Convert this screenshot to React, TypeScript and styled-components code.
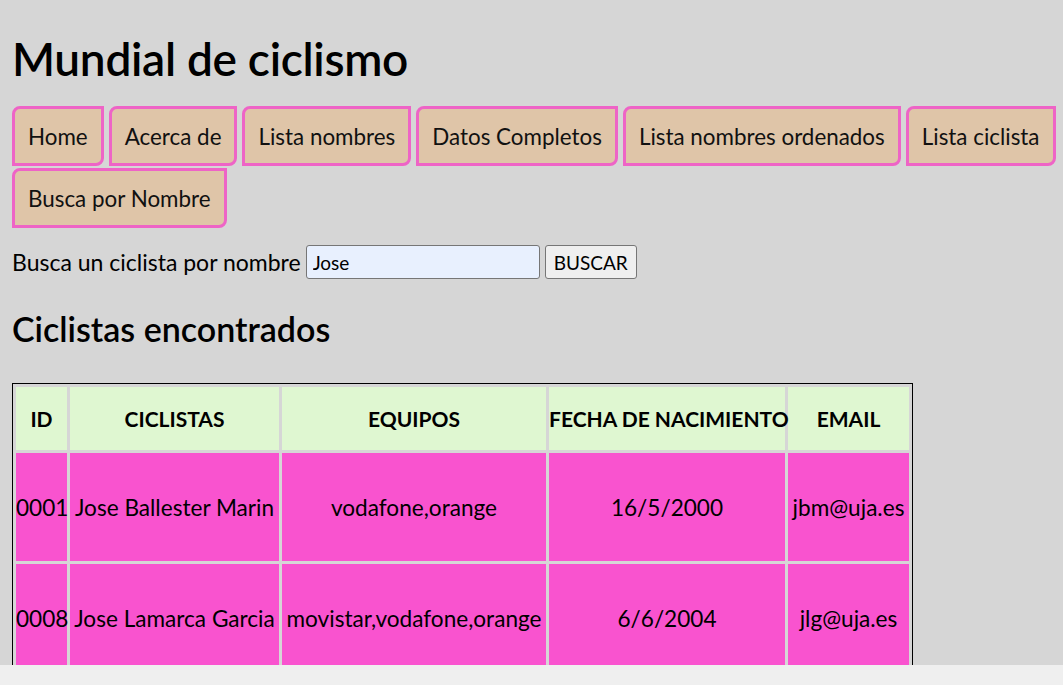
import React from "react";
import styled, { createGlobalStyle } from "styled-components";

const GlobalStyle = createGlobalStyle`
  html, body {
    margin: 0;
    padding: 0;
  }
  body {
    background: #d6d6d6;
    font-family: Lato, "Noto Sans", sans-serif;
    color: #000;
  }
`;

const Shell = styled.div`
  height: 100vh;
  display: grid;
  grid-template-rows: 1fr 20px;
  overflow: hidden;
`;

const Main = styled.main`
  overflow: hidden;
  padding: 0 2px 0 12px;
`;

const BottomStrip = styled.div`
  background: #efefef;
`;

const Title = styled.h1`
  margin: 31px 0 0;
  font-size: 46px;
  line-height: 56px;
  font-weight: 600;
  letter-spacing: -0.3px;
`;

const Nav = styled.nav`
  display: flex;
  flex-wrap: wrap;
  gap: 2px 5px;
  margin-top: 19px;
`;

const NavButton = styled.a`
  box-sizing: border-box;
  height: 60px;
  display: flex;
  align-items: center;
  padding: 0 13px;
  border: 3px solid #ee64c6;
  border-radius: 8px 0 8px 0;
  background: #dfc5a8;
  font-size: 22.4px;
  color: #111;
  text-decoration: none;
  cursor: pointer;
  white-space: nowrap;
`;

const SearchRow = styled.form`
  display: flex;
  align-items: center;
  gap: 5px;
  margin-top: 17px;
`;

const Label = styled.label`
  font-size: 23px;
  line-height: 26px;
`;

const SearchInput = styled.input`
  box-sizing: border-box;
  width: 234px;
  height: 34px;
  padding: 0 6px;
  border: 1px solid #767676;
  border-radius: 3px;
  background: #e8f0fe;
  font-family: Lato, "Noto Sans", sans-serif;
  font-size: 19px;
  color: #000;
  outline: none;
`;

const SearchButton = styled.button`
  box-sizing: border-box;
  width: 92px;
  height: 34px;
  border: 1px solid #767676;
  border-radius: 3px;
  background: #efefef;
  font-family: Lato, "Noto Sans", sans-serif;
  font-size: 19px;
  color: #000;
  padding: 0;
`;

const Subtitle = styled.h2`
  margin: 30px 0 0;
  font-size: 34px;
  line-height: 40px;
  font-weight: 600;
`;

const Table = styled.table`
  margin-top: 34px;
  border: 1px solid #000;
  border-spacing: 3px;
  table-layout: fixed;
  width: 901px;
`;

const HeadCell = styled.th`
  height: 63px;
  padding: 0;
  background: #dff7d1;
  font-size: 21px;
  font-weight: 700;
  text-align: center;
  white-space: nowrap;
`;

const Cell = styled.td`
  height: 108px;
  padding: 0;
  background: #f953cf;
  font-size: 22.6px;
  text-align: center;
  white-space: nowrap;
`;

const navItems = [
  "Home",
  "Acerca de",
  "Lista nombres",
  "Datos Completos",
  "Lista nombres ordenados",
  "Lista ciclista",
  "Busca por Nombre",
];

const columns = [
  { label: "ID", width: 51 },
  { label: "CICLISTAS", width: 209 },
  { label: "EQUIPOS", width: 264 },
  { label: "FECHA DE NACIMIENTO", width: 236 },
  { label: "EMAIL", width: 121 },
];

const rows = [
  ["0001", "Jose Ballester Marin", "vodafone,orange", "16/5/2000", "jbm@uja.es"],
  ["0008", "Jose Lamarca Garcia", "movistar,vodafone,orange", "6/6/2004", "jlg@uja.es"],
];

export default function App() {
  return (
    <>
      <GlobalStyle />
      <Shell>
        <Main>
          <Title>Mundial de ciclismo</Title>
          <Nav>
            {navItems.map((item) => (
              <NavButton key={item}>{item}</NavButton>
            ))}
          </Nav>
          <SearchRow onSubmit={(e) => e.preventDefault()}>
            <Label htmlFor="nombre">Busca un ciclista por nombre</Label>
            <SearchInput id="nombre" defaultValue="Jose" />
            <SearchButton type="submit">BUSCAR</SearchButton>
          </SearchRow>
          <Subtitle>Ciclistas encontrados</Subtitle>
          <Table>
            <colgroup>
              {columns.map((c) => (
                <col key={c.label} style={{ width: c.width }} />
              ))}
            </colgroup>
            <thead>
              <tr>
                {columns.map((c) => (
                  <HeadCell key={c.label}>{c.label}</HeadCell>
                ))}
              </tr>
            </thead>
            <tbody>
              {rows.map((r) => (
                <tr key={r[0]}>
                  {r.map((v, i) => (
                    <Cell key={i}>{v}</Cell>
                  ))}
                </tr>
              ))}
            </tbody>
          </Table>
        </Main>
        <BottomStrip />
      </Shell>
    </>
  );
}
